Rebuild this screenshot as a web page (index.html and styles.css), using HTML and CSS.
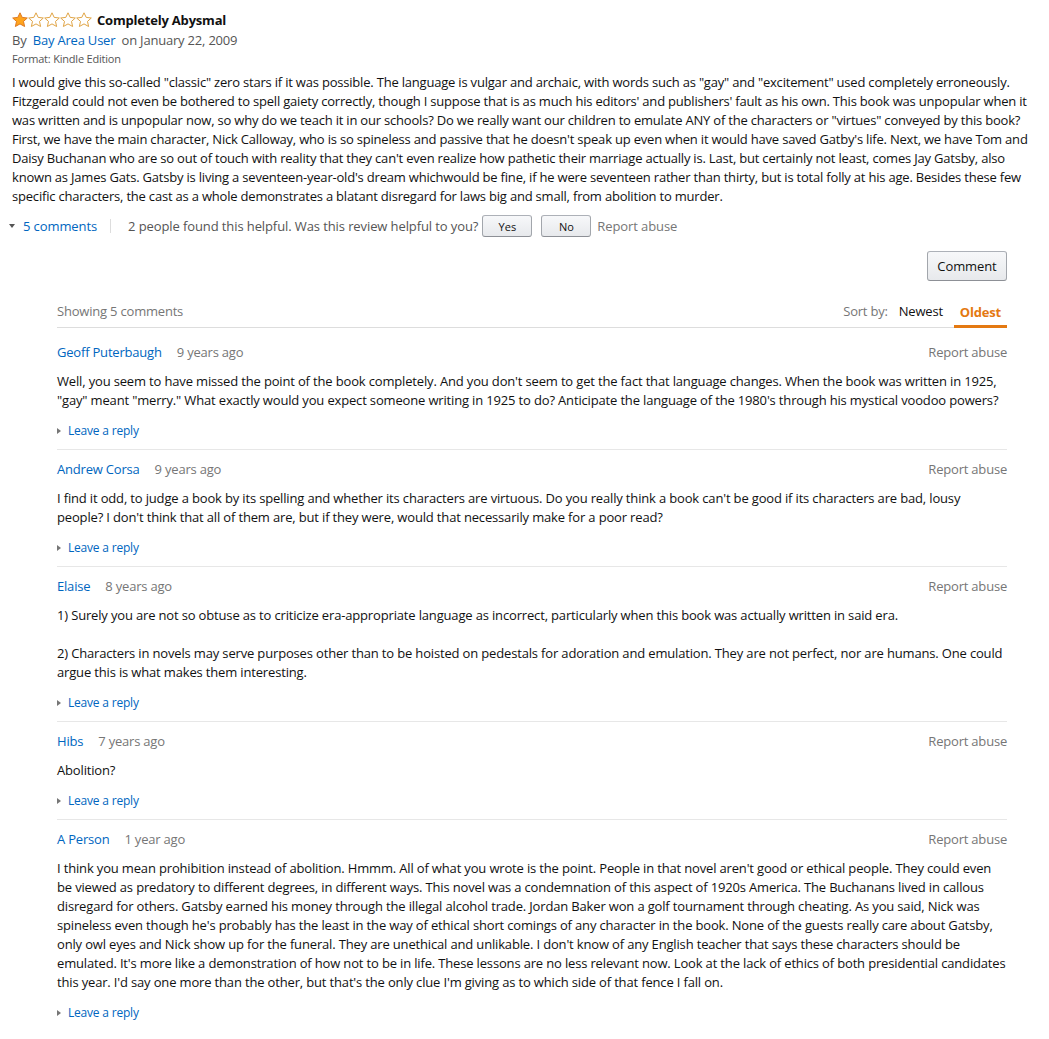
FILE: index.html
```html
<!DOCTYPE html>
<html lang="en">
<head>
  <meta charset="UTF-8">
  <title>Completely Abysmal - Customer Review</title>
  <link rel="stylesheet" href="styles.css">
</head>
<body>

  <div class="review">
    <div class="review-title">
      <svg class="stars" width="80" height="16" viewBox="0 0 80 16">
        <polygon class="star-full" points="8,0.8 10.2,5.4 15.3,6 11.5,9.4 12.6,14.5 8,11.9 3.4,14.5 4.5,9.4 0.7,6 5.8,5.4"/>
        <polygon class="star-empty" transform="translate(16 0)" points="8,0.8 10.2,5.4 15.3,6 11.5,9.4 12.6,14.5 8,11.9 3.4,14.5 4.5,9.4 0.7,6 5.8,5.4"/>
        <polygon class="star-empty" transform="translate(32 0)" points="8,0.8 10.2,5.4 15.3,6 11.5,9.4 12.6,14.5 8,11.9 3.4,14.5 4.5,9.4 0.7,6 5.8,5.4"/>
        <polygon class="star-empty" transform="translate(48 0)" points="8,0.8 10.2,5.4 15.3,6 11.5,9.4 12.6,14.5 8,11.9 3.4,14.5 4.5,9.4 0.7,6 5.8,5.4"/>
        <polygon class="star-empty" transform="translate(64 0)" points="8,0.8 10.2,5.4 15.3,6 11.5,9.4 12.6,14.5 8,11.9 3.4,14.5 4.5,9.4 0.7,6 5.8,5.4"/>
      </svg>
      <b>Completely Abysmal</b>
    </div>
    <div class="review-byline">By <a href="#">Bay Area User</a> on January 22, 2009</div>
    <div class="review-format">Format: Kindle Edition</div>

    <p class="review-text">I would give this so-called "classic" zero stars if it was possible. The language is vulgar and archaic, with words such as "gay" and "excitement" used completely erroneously. Fitzgerald could not even be bothered to spell gaiety correctly, though I suppose that is as much his editors' and publishers' fault as his own. This book was unpopular when it was written and is unpopular now, so why do we teach it in our schools? Do we really want our children to emulate ANY of the characters or "virtues" conveyed by this book? First, we have the main character, Nick Calloway, who is so spineless and passive that he doesn't speak up even when it would have saved Gatby's life. Next, we have Tom and Daisy Buchanan who are so out of touch with reality that they can't even realize how pathetic their marriage actually is. Last, but certainly not least, comes Jay Gatsby, also known as James Gats. Gatsby is living a seventeen-year-old's dream whichwould be fine, if he were seventeen rather than thirty, but is total folly at his age. Besides these few specific characters, the cast as a whole demonstrates a blatant disregard for laws big and small, from abolition to murder.</p>

    <div class="review-actions">
      <span class="caret-down"></span>
      <a href="#">5 comments</a>
      <span class="divider"></span>
      <span class="helpful">2 people found this helpful. Was this review helpful to you?</span>
      <button class="btn btn-small">Yes</button>
      <button class="btn btn-small">No</button>
      <a href="#" class="report">Report abuse</a>
    </div>
  </div>

  <div class="comments">
    <div class="comment-btn-row">
      <button class="btn btn-comment">Comment</button>
    </div>

    <div class="comments-head">
      <span class="showing">Showing 5 comments</span>
      <div class="sort">
        <span class="sort-label">Sort by:</span>
        <span class="sort-tab">Newest</span>
        <span class="sort-tab active">Oldest</span>
      </div>
    </div>

    <div class="comment-list">
      <div class="comment">
        <div class="comment-head">
          <a href="#">Geoff Puterbaugh</a>
          <span class="ago">9 years ago</span>
          <a href="#" class="report">Report abuse</a>
        </div>
        <p class="comment-text">Well, you seem to have missed the point of the book completely. And you don't seem to get the fact that language changes. When the book was written in 1925, "gay" meant "merry." What exactly would you expect someone writing in 1925 to do? Anticipate the language of the 1980's through his mystical voodoo powers?</p>
        <a href="#" class="reply">Leave a reply</a>
      </div>

      <div class="comment">
        <div class="comment-head">
          <a href="#">Andrew Corsa</a>
          <span class="ago">9 years ago</span>
          <a href="#" class="report">Report abuse</a>
        </div>
        <p class="comment-text">I find it odd, to judge a book by its spelling and whether its characters are virtuous. Do you really think a book can't be good if its characters are bad, lousy people? I don't think that all of them are, but if they were, would that necessarily make for a poor read?</p>
        <a href="#" class="reply">Leave a reply</a>
      </div>

      <div class="comment">
        <div class="comment-head">
          <a href="#">Elaise</a>
          <span class="ago">8 years ago</span>
          <a href="#" class="report">Report abuse</a>
        </div>
        <p class="comment-text">1) Surely you are not so obtuse as to criticize era-appropriate language as incorrect, particularly when this book was actually written in said era.<br><br>2) Characters in novels may serve purposes other than to be hoisted on pedestals for adoration and emulation. They are not perfect, nor are humans. One could argue this is what makes them interesting.</p>
        <a href="#" class="reply">Leave a reply</a>
      </div>

      <div class="comment">
        <div class="comment-head">
          <a href="#">Hibs</a>
          <span class="ago">7 years ago</span>
          <a href="#" class="report">Report abuse</a>
        </div>
        <p class="comment-text">Abolition?</p>
        <a href="#" class="reply">Leave a reply</a>
      </div>

      <div class="comment">
        <div class="comment-head">
          <a href="#">A Person</a>
          <span class="ago">1 year ago</span>
          <a href="#" class="report">Report abuse</a>
        </div>
        <p class="comment-text">I think you mean prohibition instead of abolition. Hmmm. All of what you wrote is the point. People in that novel aren't good or ethical people. They could even be viewed as predatory to different degrees, in different ways. This novel was a condemnation of this aspect of 1920s America. The Buchanans lived in callous disregard for others. Gatsby earned his money through the illegal alcohol trade. Jordan Baker won a golf tournament through cheating. As you said, Nick was spineless even though he's probably has the least in the way of ethical short comings of any character in the book. None of the guests really care about Gatsby, only owl eyes and Nick show up for the funeral. They are unethical and unlikable. I don't know of any English teacher that says these characters should be emulated. It's more like a demonstration of how not to be in life. These lessons are no less relevant now. Look at the lack of ethics of both presidential candidates this year. I'd say one more than the other, but that's the only clue I'm giving as to which side of that fence I fall on.</p>
        <a href="#" class="reply">Leave a reply</a>
      </div>
    </div>
  </div>

</body>
</html>
```
FILE: styles.css
```css
body {
  font-family: "Open Sans", Arial, sans-serif;
  font-size: 13px;
  letter-spacing: -0.2px;
  color: #111;
  background: white;
  margin: 0;
  padding: 10px 10px 20px 12px;
}

a {
  color: #0066c0;
  text-decoration: none;
}

p {
  margin: 0;
}

/* review */

.review-title {
  display: flex;
  align-items: center;
  height: 20px;
}

.stars {
  display: block;
  margin-right: 5px;
}

.star-full {
  fill: #ffa41c;
  stroke: #de7921;
  stroke-width: 1;
}

.star-empty {
  fill: white;
  stroke: #e0a445;
  stroke-width: 1;
}

.review-byline {
  line-height: 20px;
  color: #555;
}

.review-byline a {
  margin: 0 3px;
}

.review-format {
  font-size: 11px;
  line-height: 18px;
  color: #555;
}

.review-text {
  margin-top: 5px;
  line-height: 19px;
}

.review-actions {
  display: flex;
  align-items: center;
  height: 22px;
  margin: 9px 0 0 -3px;
  color: #555;
  letter-spacing: -0.1px;
}

.caret-down {
  width: 0;
  height: 0;
  border-left: 3px solid transparent;
  border-right: 3px solid transparent;
  border-top: 4px solid #555;
  margin-right: 8px;
}

.divider {
  width: 1px;
  height: 14px;
  background: #ddd;
  margin: 0 17px 0 13px;
}

.btn {
  font-family: "Open Sans", Arial, sans-serif;
  color: #111;
  background: linear-gradient(#f7f8fa, #e7e9ec);
  border: 1px solid #adb1b8;
  border-color: #adb1b8 #a2a6ac #8d9096;
  border-radius: 3px;
  cursor: pointer;
}

.btn-small {
  width: 50px;
  height: 22px;
  font-size: 11px;
  padding: 0;
  margin-left: 4px;
}

.btn-small + .btn-small {
  margin-left: 9px;
}

.review-actions .report {
  margin-left: 6px;
}

.report {
  color: #767676;
}

/* comments */

.comments {
  margin: 0 32px 0 45px;
}

.comment-btn-row {
  display: flex;
  justify-content: flex-end;
  margin-top: 14px;
}

.btn-comment {
  width: 80px;
  height: 30px;
  font-size: 13px;
  letter-spacing: -0.1px;
}

.comments-head {
  display: flex;
  justify-content: space-between;
  align-items: flex-end;
  margin-top: 21px;
  border-bottom: 1px solid #ddd;
  line-height: 19px;
}

.showing {
  color: #767676;
  padding-bottom: 6px;
}

.sort {
  display: flex;
  align-items: flex-end;
}

.sort-label {
  color: #767676;
  padding-bottom: 6px;
  margin-right: 5px;
}

.sort-tab {
  padding: 0 6px 6px;
}

.sort-tab.active {
  color: #e47911;
  font-weight: bold;
  padding-bottom: 3px;
  border-bottom: 3px solid #e47911;
  margin-bottom: -1px;
  margin-left: 5px;
}

.comment-list {
  padding-top: 5px;
}

.comment {
  padding: 10px 0;
  border-bottom: 1px solid #e7e7e7;
}

.comment:last-child {
  border-bottom: none;
}

.comment-head {
  display: flex;
  line-height: 19px;
}

.ago {
  color: #767676;
  margin-left: 15px;
}

.comment-head .report {
  margin-left: auto;
}

.comment-text {
  margin-top: 10px;
  line-height: 19px;
  letter-spacing: -0.16px;
}

.reply {
  display: inline-flex;
  align-items: center;
  margin-top: 12px;
  font-size: 12px;
  line-height: 17px;
}

.reply::before {
  content: "";
  width: 0;
  height: 0;
  border-top: 3px solid transparent;
  border-bottom: 3px solid transparent;
  border-left: 4px solid #767676;
  margin-right: 7px;
}
```
